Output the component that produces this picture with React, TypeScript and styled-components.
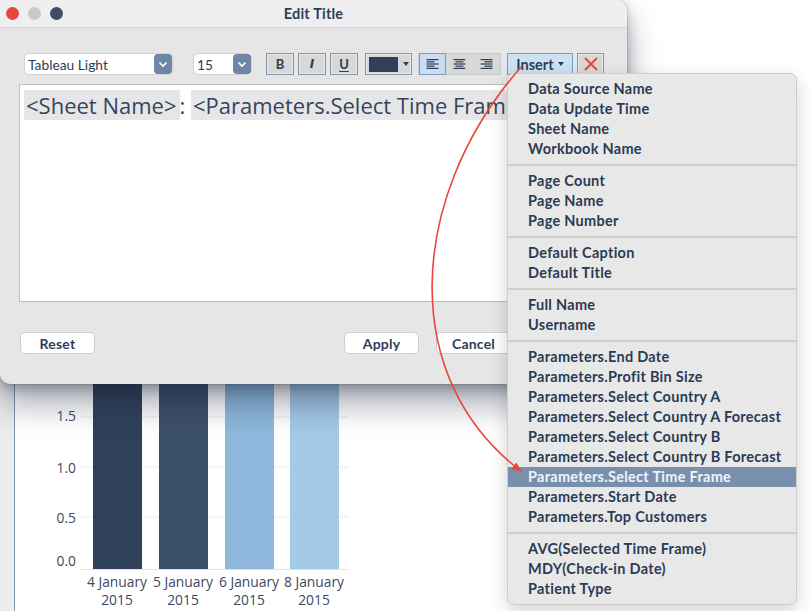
import React from "react";
import styled, { createGlobalStyle } from "styled-components";

const GlobalStyle = createGlobalStyle`
  html, body { margin: 0; padding: 0; width: 811px; height: 611px; overflow: hidden; background: #ffffff; }
  body { font-family: "Lato", "Liberation Sans", sans-serif; color: #2d3e56; }
  * { box-sizing: border-box; }
`;

const Page = styled.div`
  position: relative;
  width: 811px;
  height: 611px;
  overflow: hidden;
`;

/* ---------- background worksheet ---------- */
const Worksheet = styled.div`
  display: flex;
  width: 100%;
  height: 100%;
`;
const LeftStrip = styled.div`
  width: 15px;
  background: #ececec;
  border-right: 1px solid #7f92ad;
`;
const ChartArea = styled.div`
  flex: 1;
  display: flex;
  flex-direction: column;
  justify-content: flex-end;
  background: #ffffff;
`;

/* ---------- dialog ---------- */
const Dialog = styled.div`
  position: absolute;
  left: 0;
  top: 0;
  width: 627px;
  height: 384px;
  background: #e6e6e6;
  border-radius: 0 10px 10px 10px;
  box-shadow: 0 20px 32px rgba(20, 30, 50, 0.38), 0 4px 12px rgba(20, 30, 50, 0.3),
    0 0 0 1px rgba(0, 0, 0, 0.08);
  display: flex;
  flex-direction: column;
  overflow: hidden;
`;
const TitleBar = styled.div`
  height: 28px;
  flex: none;
  background: #efeef0;
  border-bottom: 1px solid #d6d6d6;
  display: grid;
  grid-template-columns: 1fr auto 1fr;
  align-items: center;
`;
const Lights = styled.div`
  display: flex;
  gap: 9px;
  padding-left: 6px;
`;
const Light = styled.span<{ $c: string }>`
  width: 13px;
  height: 13px;
  border-radius: 50%;
  background: ${(p) => p.$c};
`;
const Title = styled.div`
  font-weight: 700;
  font-size: 14.5px;
  color: #2d3e56;
  letter-spacing: 0.2px;
  margin-top: -1px;
`;
const Body = styled.div`
  flex: 1;
  display: flex;
  flex-direction: column;
  padding: 25px 20px 0 19px;
`;
const Toolbar = styled.div`
  display: flex;
  align-items: center;
  height: 22px;
  padding-left: 5px;
`;
const Select = styled.div<{ $w: number; $ml?: number }>`
  width: ${(p) => p.$w}px;
  margin-left: ${(p) => p.$ml || 0}px;
  height: 22px;
  background: #ffffff;
  border: 1px solid #d2d2d2;
  border-radius: 5px;
  display: flex;
  align-items: center;
  justify-content: space-between;
  padding-left: 3px;
  font-size: 13.8px;
  color: #2d3e56;
`;
const Chevron = styled.span`
  width: 18px;
  height: 20px;
  border-radius: 4px;
  background: #6f87a7;
  display: flex;
  align-items: center;
  justify-content: center;
`;
const ToolBtn = styled.div<{ $w: number; $ml: number; $active?: boolean }>`
  width: ${(p) => p.$w}px;
  height: 22px;
  margin-left: ${(p) => p.$ml}px;
  background: ${(p) => (p.$active ? "#c9def1" : "#d8d8d8")};
  border: 1px solid ${(p) => (p.$active ? "#7b9cc2" : "#8397b0")};
  box-shadow: inset 0 0 0 1px rgba(255, 255, 255, 0.45);
  display: flex;
  align-items: center;
  justify-content: center;
  font-size: 13px;
  font-weight: 700;
  color: #2d3e56;
`;
const BoldI = styled.span`
  font-style: italic;
  font-family: "DejaVu Sans", sans-serif;
  font-size: 12px;
`;
const BoldU = styled.span`
  text-decoration: underline;
  text-underline-offset: 2px;
`;
const Swatch = styled.span`
  width: 29px;
  height: 15px;
  background: #2f4159;
  margin-right: 5px;
`;
const Caret = styled.span`
  width: 0;
  height: 0;
  border-left: 3.5px solid transparent;
  border-right: 3.5px solid transparent;
  border-top: 4px solid #2d3e56;
`;
const AlignGroup = styled.div`
  margin-left: 6px;
  display: flex;
  height: 22px;
  width: 83px;
  background: #d8d8d8;
  border: 1px solid #c2cad6;
`;
const AlignBtn = styled.div<{ $active?: boolean }>`
  flex: 1;
  display: flex;
  align-items: center;
  justify-content: center;
  background: ${(p) => (p.$active ? "#c9def1" : "transparent")};
  border: ${(p) => (p.$active ? "1px solid #7b9cc2" : "1px solid transparent")};
  margin: -1px 0;
`;
const InsertBtn = styled.div`
  margin-left: 6px;
  width: 66px;
  height: 22px;
  background: #cde1f3;
  border: 1px solid #7b9cc2;
  display: flex;
  align-items: center;
  justify-content: center;
  gap: 4px;
  font-weight: 700;
  font-size: 14.5px;
  color: #2d3e56;
`;
const Editor = styled.div`
  margin-top: 9px;
  height: 218px;
  background: #ffffff;
  border: 1px solid #bdbdbd;
  padding: 4px 4px;
  font-family: "Open Sans", "Liberation Sans", sans-serif;
  font-size: 22px;
  color: #34455c;
  white-space: nowrap;
  overflow: hidden;
  line-height: 32px;
`;
const Token = styled.span`
  background: #e6e6e8;
  padding: 0 3px 0 2px;
`;
const Footer = styled.div`
  margin-top: 30px;
  display: flex;
  align-items: center;
  padding-left: 1px;
  padding-right: 96px;
`;
const Button = styled.div<{ $ml?: number }>`
  width: 75px;
  height: 22px;
  margin-left: ${(p) => p.$ml || 0}px;
  background: #ffffff;
  border: 1px solid #cfcfcf;
  border-radius: 5px;
  display: flex;
  align-items: center;
  justify-content: center;
  font-weight: 700;
  font-size: 14px;
  letter-spacing: 0.2px;
  color: #2d3e56;
`;
const Spacer = styled.div`
  flex: 1;
`;

/* ---------- menu ---------- */
const Menu = styled.div`
  position: absolute;
  left: 507px;
  top: 73px;
  width: 290px;
  background: #e8e8e8;
  border: 1px solid #cdcdcd;
  border-radius: 7px;
  padding: 5px 0;
  box-shadow: 0 6px 18px rgba(0, 0, 0, 0.18);
`;
const Item = styled.div<{ $hl?: boolean }>`
  height: 20px;
  line-height: 19px;
  padding-left: 20px;
  font-size: 14.5px;
  font-weight: 700;
  letter-spacing: 0.28px;
  color: ${(p) => (p.$hl ? "#eef4fb" : "#2b3b53")};
  background: ${(p) => (p.$hl ? "#7990ad" : "transparent")};
  white-space: nowrap;
`;
const Sep = styled.div`
  height: 2px;
  margin: 5px 0;
  background: #cecece;
`;

const Overlay = styled.svg`
  position: absolute;
  left: 0;
  top: 0;
  pointer-events: none;
`;

const groups: string[][] = [
  ["Data Source Name", "Data Update Time", "Sheet Name", "Workbook Name"],
  ["Page Count", "Page Name", "Page Number"],
  ["Default Caption", "Default Title"],
  ["Full Name", "Username"],
  [
    "Parameters.End Date",
    "Parameters.Profit Bin Size",
    "Parameters.Select Country A",
    "Parameters.Select Country A Forecast",
    "Parameters.Select Country B",
    "Parameters.Select Country B Forecast",
    "Parameters.Select Time Frame",
    "Parameters.Start Date",
    "Parameters.Top Customers",
  ],
  ["AVG(Selected Time Frame)", "MDY(Check-in Date)", "Patient Type"],
];

const bars = [
  { x: 94, color: "#2f4159", label: "4 January" },
  { x: 160, color: "#3c4f69", label: "5 January" },
  { x: 226, color: "#8fb8dc", label: "6 January" },
  { x: 291, color: "#a3cae7", label: "8 January" },
];

const ChevronIcon = () => (
  <svg width="10" height="7" viewBox="0 0 10 7">
    <path d="M1.5 1.5 L5 5 L8.5 1.5" fill="none" stroke="#ffffff" strokeWidth="1.6" />
  </svg>
);

const AlignIcon = ({ kind }: { kind: "l" | "c" | "r" }) => {
  const lines = [12, 8, 12, 8, 12];
  return (
    <svg width="13" height="11" viewBox="0 0 13 11">
      {lines.map((w, i) => {
        const x = kind === "l" ? 0.5 : kind === "r" ? 12.5 - w : (13 - w) / 2;
        return <rect key={i} x={x} y={i * 2.2} width={w} height="1.2" fill="#2d3e56" />;
      })}
    </svg>
  );
};

const Chart = () => {
  // coordinates: page x - 16, page y - 300
  const ox = 16;
  const oy = 300;
  return (
    <svg width="345" height="311" viewBox="0 0 345 311">
      {[417, 467, 517].map((y) => (
        <line key={y} x1={82 - ox} x2={349 - ox} y1={y - oy} y2={y - oy} stroke="#ebebeb" strokeWidth="1" />
      ))}
      <line x1={82 - ox} x2={349 - ox} y1={569.5 - oy} y2={569.5 - oy} stroke="#e2e2e2" strokeWidth="1" />
      {bars.map((b) => (
        <rect key={b.x} x={b.x - ox} y={0} width={49} height={569 - oy} fill={b.color} />
      ))}
      <g fontFamily="Open Sans, Liberation Sans, sans-serif" fontSize="13.8" fill="#3c4a5e">
        {[
          ["1.5", 416],
          ["1.0", 468],
          ["0.5", 518],
          ["0.0", 561],
        ].map(([t, y]) => (
          <text key={t as string} x={77 - ox} y={(y as number) - oy + 5} textAnchor="end">
            {t}
          </text>
        ))}
        {bars.map((b) => (
          <g key={b.label}>
            <text x={b.x + 24 - ox} y={582 - oy + 5} textAnchor="middle">
              {b.label}
            </text>
            <text x={b.x + 24 - ox} y={600 - oy + 5} textAnchor="middle">
              2015
            </text>
          </g>
        ))}
      </g>
    </svg>
  );
};

export default function App() {
  return (
    <Page>
      <GlobalStyle />
      <Worksheet>
        <LeftStrip />
        <ChartArea>
          <Chart />
        </ChartArea>
      </Worksheet>

      <Dialog>
        <TitleBar>
          <Lights>
            <Light $c="#e9473c" />
            <Light $c="#c9c9c9" />
            <Light $c="#3b4d68" />
          </Lights>
          <Title>Edit Title</Title>
          <div />
        </TitleBar>
        <Body>
          <Toolbar>
            <Select $w={149}>
              <span>Tableau Light</span>
              <Chevron>
                <ChevronIcon />
              </Chevron>
            </Select>
            <Select $w={59} $ml={20}>
              <span>15</span>
              <Chevron>
                <ChevronIcon />
              </Chevron>
            </Select>
            <ToolBtn $w={28} $ml={14}>B</ToolBtn>
            <ToolBtn $w={28} $ml={4}>
              <BoldI>I</BoldI>
            </ToolBtn>
            <ToolBtn $w={28} $ml={4}>
              <BoldU>U</BoldU>
            </ToolBtn>
            <ToolBtn $w={47} $ml={7}>
              <Swatch />
              <Caret />
            </ToolBtn>
            <AlignGroup>
              <AlignBtn $active>
                <AlignIcon kind="l" />
              </AlignBtn>
              <AlignBtn>
                <AlignIcon kind="c" />
              </AlignBtn>
              <AlignBtn>
                <AlignIcon kind="r" />
              </AlignBtn>
            </AlignGroup>
            <InsertBtn>
              Insert
              <Caret />
            </InsertBtn>
            <ToolBtn $w={27} $ml={4}>
              <svg width="16" height="16" viewBox="0 0 16 16">
                <path d="M2 2 L14 14 M14 2 L2 14" stroke="#e8473a" strokeWidth="2" />
              </svg>
            </ToolBtn>
          </Toolbar>
          <Editor>
            <Token>&lt;Sheet Name&gt;</Token>: <Token>&lt;Parameters.Select Time Frame&gt;</Token>
          </Editor>
          <Footer>
            <Button>Reset</Button>
            <Spacer />
            <Button>Apply</Button>
            <Button $ml={17}>Cancel</Button>
          </Footer>
        </Body>
      </Dialog>

      <Menu>
        {groups.map((g, gi) => (
          <React.Fragment key={gi}>
            {gi > 0 && <Sep />}
            {g.map((it) => (
              <Item key={it} $hl={it === "Parameters.Select Time Frame"}>
                {it}
              </Item>
            ))}
          </React.Fragment>
        ))}
      </Menu>

      <Overlay width="811" height="611" viewBox="0 0 811 611">
        <defs>
          <marker id="ah" markerWidth="10" markerHeight="8" refX="9" refY="4" orient="auto" markerUnits="userSpaceOnUse">
            <path d="M0 0 L10 4 L0 8 Z" fill="#e8473a" />
          </marker>
        </defs>
        <path
          d="M521 67 C 405 200, 400 380, 521 471"
          fill="none"
          stroke="#e8473a"
          strokeWidth="1.6"
          markerEnd="url(#ah)"
        />
      </Overlay>
    </Page>
  );
}
